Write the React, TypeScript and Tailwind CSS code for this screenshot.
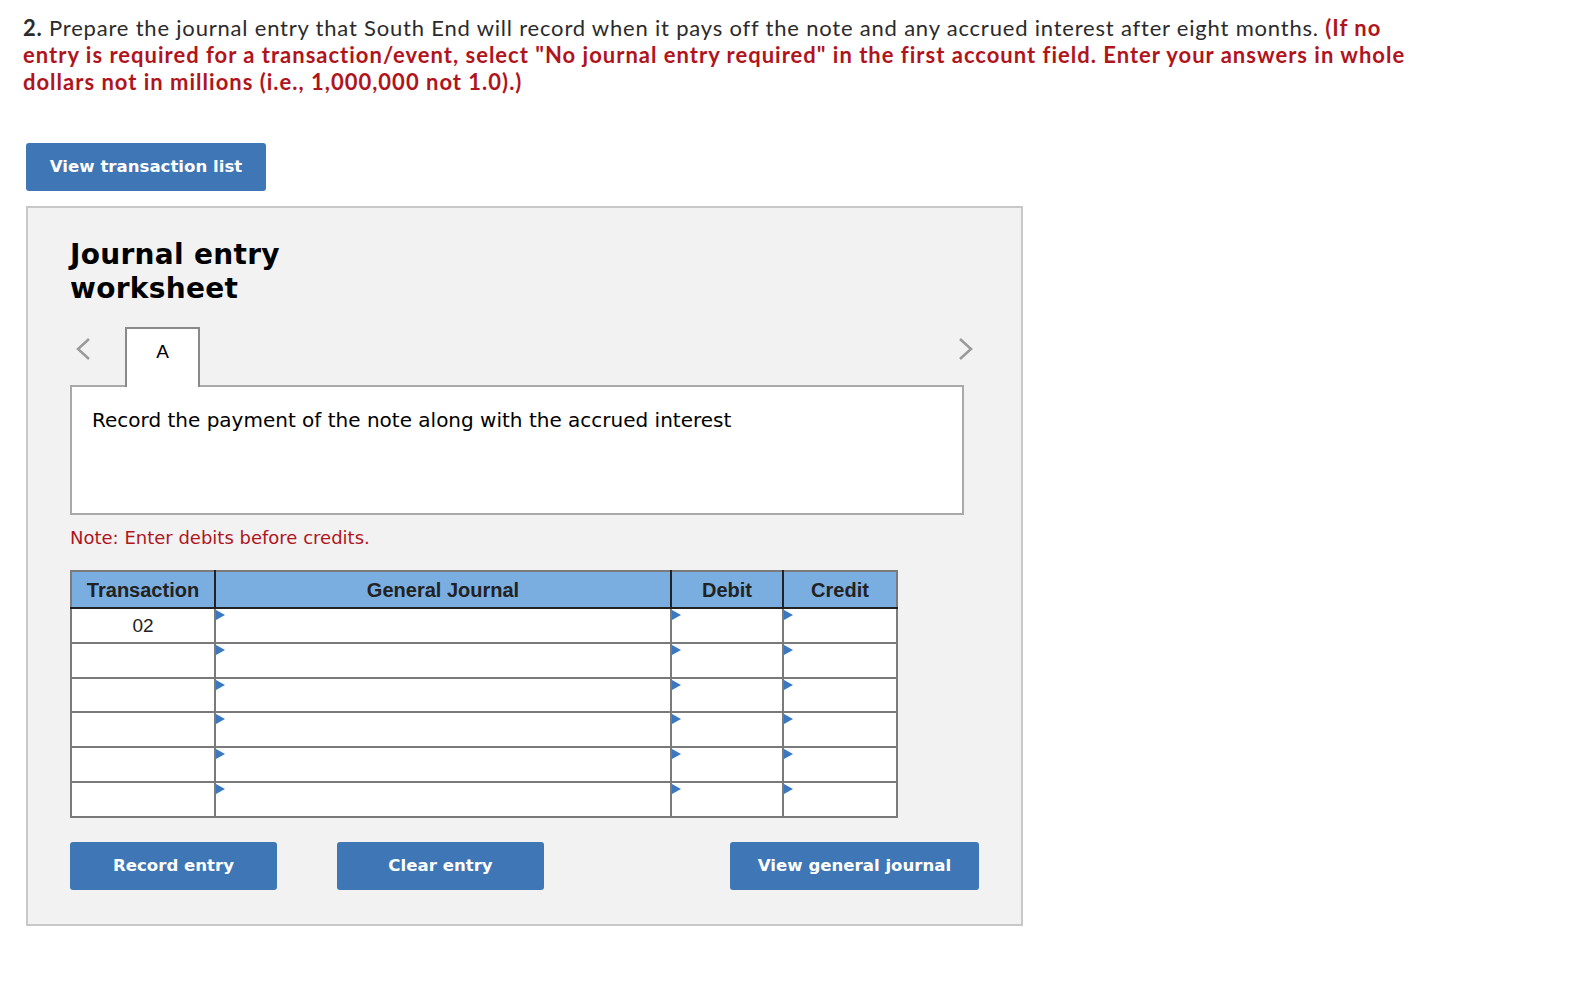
import React from "react";

const verdana = { fontFamily: '"DejaVu Sans", Verdana, sans-serif' };
const arial = { fontFamily: '"Liberation Sans", Arial, sans-serif' };
const lato = { fontFamily: 'Lato, "Open Sans", sans-serif' };

function Tri() {
  return (
    <span className="absolute left-0 top-[1px] w-0 h-0 border-y-[5.5px] border-y-transparent border-l-[9px] border-l-[#3b78c2]" />
  );
}

function Btn({ label, w }: { label: string; w: string }) {
  return (
    <button
      className={`h-[48px] ${w} rounded-[3px] bg-[#3e76b6] text-white text-[16.6px] font-bold flex items-center justify-center pt-[1px]`}
      style={verdana}
    >
      {label}
    </button>
  );
}

export default function App() {
  const rows = ["02", "", "", "", "", ""];
  return (
    <div className="min-h-[988px] w-[1592px] bg-white">
      <div className="pl-[23px] pt-[14px] text-[22px] leading-[27px] text-[#2b2b2b] tracking-[0.8px]" style={lato}>
        <div className="whitespace-nowrap">
          <b className="font-bold">2.</b> Prepare the journal entry that South End will record when it pays off the note and any accrued interest after eight months.{" "}
          <b className="font-bold text-[#b0141c] tracking-[1px]">(If no</b>
        </div>
        <div className="whitespace-nowrap font-bold text-[#b0141c] tracking-[1px]">
          entry is required for a transaction/event, select "No journal entry required" in the first account field. Enter your answers in whole
        </div>
        <div className="whitespace-nowrap font-bold text-[#b0141c] tracking-[1px]">
          dollars not in millions (i.e., 1,000,000 not 1.0).)
        </div>
      </div>

      <div className="pl-[26px] pt-[48px]">
        <Btn label="View transaction list" w="w-[240px]" />
      </div>

      <div className="ml-[26px] mt-[15px] w-[997px] h-[720px] border-2 border-[#c8c8c8] bg-[#f2f2f2] pl-[42px] pt-[30px]">
        <h2 className="text-[28px] leading-[34px] font-bold text-black tracking-[0.3px]" style={verdana}>
          Journal entry
          <br />
          worksheet
        </h2>

        <div className="mt-[21px] flex items-start w-[905px] relative z-10">
          <svg className="mt-[11px] ml-[6px]" width="14" height="22" viewBox="0 0 14 22">
            <polyline points="13,1 2,11 13,21" fill="none" stroke="#9a9a9a" strokeWidth="2.5" />
          </svg>
          <div
            className="ml-[35px] w-[75px] h-[60px] border-2 border-b-0 border-[#8a8a8a] bg-white flex justify-center pt-[9px] text-[19px] text-black"
            style={arial}
          >
            A
          </div>
          <div className="flex-1" />
          <svg className="mt-[11px] mr-[2px]" width="14" height="22" viewBox="0 0 14 22">
            <polyline points="1,1 12,11 1,21" fill="none" stroke="#9a9a9a" strokeWidth="2.5" />
          </svg>
        </div>

        <div
          className="-mt-[2px] w-[894px] h-[130px] border-2 border-[#a9a9a9] bg-white pl-[20px] pt-[21px] text-[20px] leading-[24px] text-black"
          style={verdana}
        >
          Record the payment of the note along with the accrued interest
        </div>

        <div className="mt-[12px] text-[18px] leading-[22px] text-[#b0141c]" style={verdana}>
          Note: Enter debits before credits.
        </div>

        <table className="mt-[21px] border-collapse table-fixed w-[826px]" style={arial}>
          <colgroup>
            <col className="w-[144px]" />
            <col className="w-[456px]" />
            <col className="w-[112px]" />
            <col className="w-[114px]" />
          </colgroup>
          <thead>
            <tr className="h-[37px] bg-[#7aade0] text-[20px] font-bold text-[#222]">
              <th className="border-2 border-[#7a7a7a] border-r-[#222] border-b-[#222] font-bold">Transaction</th>
              <th className="border-2 border-[#7a7a7a] border-r-[#222] border-b-[#222] border-l-[#222] font-bold">General Journal</th>
              <th className="border-2 border-[#7a7a7a] border-r-[#222] border-b-[#222] border-l-[#222] font-bold">Debit</th>
              <th className="border-2 border-[#7a7a7a] border-b-[#222] border-l-[#222] font-bold">Credit</th>
            </tr>
          </thead>
          <tbody>
            {rows.map((r, i) => (
              <tr key={i} className="h-[34.8px] bg-white text-[19px] text-[#222]">
                <td className="border-2 border-[#7a7a7a] text-center p-0 pt-[2px]">{r}</td>
                <td className="border-2 border-[#7a7a7a] p-0 relative">
                  <Tri />
                </td>
                <td className="border-2 border-[#7a7a7a] p-0 relative">
                  <Tri />
                </td>
                <td className="border-2 border-[#7a7a7a] p-0 relative">
                  <Tri />
                </td>
              </tr>
            ))}
          </tbody>
        </table>

        <div className="mt-[24px] flex">
          <Btn label="Record entry" w="w-[207px]" />
          <div className="ml-[60px]">
            <Btn label="Clear entry" w="w-[207px]" />
          </div>
          <div className="ml-[186px]">
            <Btn label="View general journal" w="w-[249px]" />
          </div>
        </div>
      </div>
    </div>
  );
}
